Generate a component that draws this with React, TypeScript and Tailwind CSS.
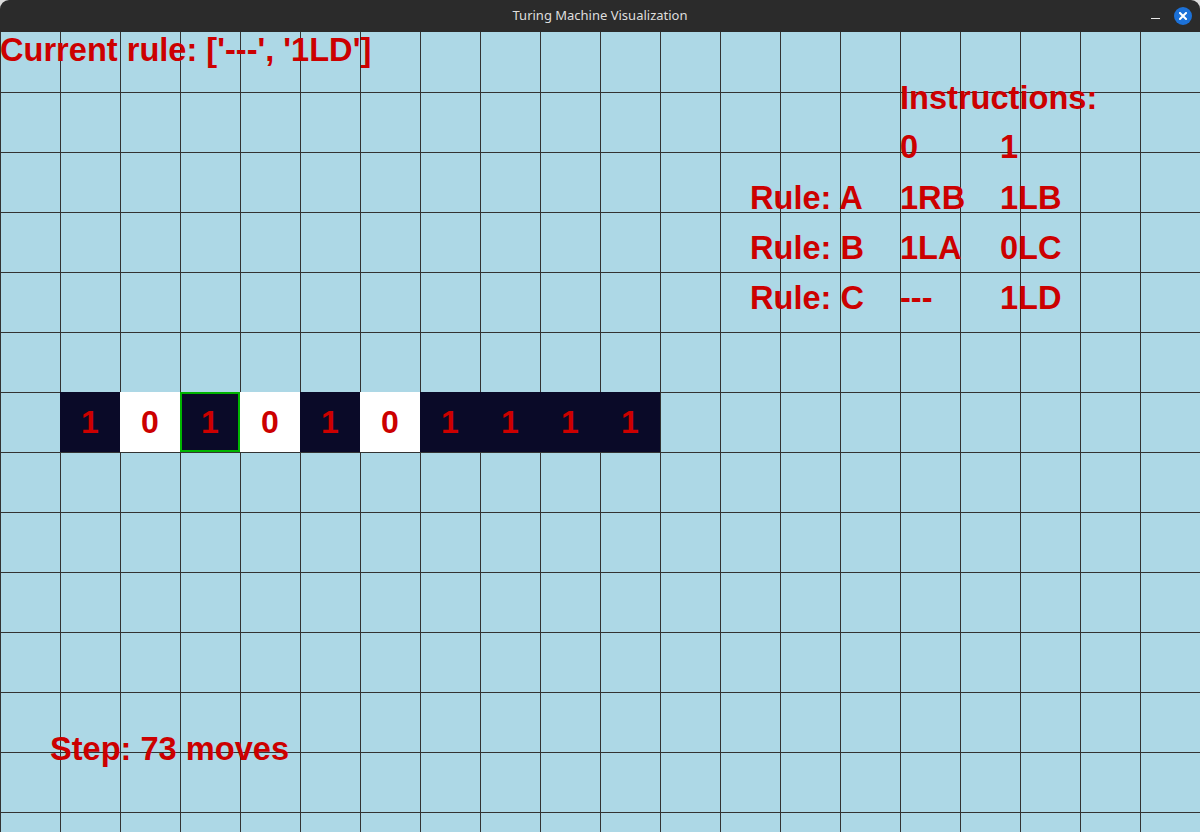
import React from 'react';

const COLS = 20;
const ROWS = 14;
const TAPE_ROW = 6;
const tape = [1, 0, 1, 0, 1, 0, 1, 1, 1, 1];
const HEAD = 2;

const rules = [
    { name: 'A', zero: '1RB', one: '1LB' },
    { name: 'B', zero: '1LA', one: '0LC' },
    { name: 'C', zero: '---', one: '1LD' },
];

function Label({
    top,
    left,
    children,
}: {
    top: number;
    left: number;
    children: React.ReactNode;
}) {
    return (
        <span
            className="absolute whitespace-pre font-['Liberation_Sans',Arial,sans-serif] text-[32.6px] leading-[32px] font-bold text-[#cc0000]"
            style={{ top, left }}
        >
            {children}
        </span>
    );
}

function Cell({ row, col }: { row: number; col: number }) {
    const tapeIdx = col - 1;
    const onTape = row === TAPE_ROW && tapeIdx >= 0 && tapeIdx < tape.length;

    if (onTape) {
        const v = tape[tapeIdx];
        const bg = v === 1 ? 'bg-[#0a0a28]' : 'bg-white';
        const head =
            tapeIdx === HEAD ? 'border-2 border-[#00b400]' : '';
        return (
            <div
                className={`${bg} ${head} flex items-center justify-center font-['Liberation_Sans',Arial,sans-serif] text-[32px] font-bold text-[#cc0000]`}
            >
                {v}
            </div>
        );
    }

    return (
        <div
            className={
                row === 0
                    ? 'border-l border-[#333333]'
                    : 'border-l border-t border-[#333333]'
            }
        />
    );
}

export default function App() {
    const cells = [];
    for (let r = 0; r < ROWS; r++) {
        for (let c = 0; c < COLS; c++) {
            cells.push(<Cell key={`${r}-${c}`} row={r} col={c} />);
        }
    }

    return (
        <div className="w-[1200px] h-[832px] bg-[#dcdcdc] flex flex-col overflow-hidden">
            {/* window title bar */}
            <div className="h-[32px] shrink-0 bg-[#2b2b2b] rounded-t-[9px] flex items-center relative">
                <div className="flex-1 text-center text-[13px] text-[#dedede] font-['Noto_Sans',Ubuntu,sans-serif]">
                    Turing Machine Visualization
                </div>
                <div className="absolute right-[8px] top-0 h-[32px] flex items-center gap-[14px]">
                    <div className="w-[9px] h-[1px] bg-[#e8e8e8] mt-[5px]" />
                    <div className="w-[18px] h-[18px] rounded-full bg-[#1c71d8] flex items-center justify-center">
                        <svg width="8" height="8" viewBox="0 0 8 8">
                            <path
                                d="M1 1 L7 7 M7 1 L1 7"
                                stroke="white"
                                strokeWidth="2"
                                strokeLinecap="square"
                            />
                        </svg>
                    </div>
                </div>
            </div>

            {/* pygame surface */}
            <div className="relative w-[1200px] h-[800px] overflow-hidden bg-[#add8e6]">
                <div className="grid grid-cols-[repeat(20,60px)] auto-rows-[60px]">
                    {cells}
                </div>

                <Label top={2} left={0}>
                    Current rule: ['---', '1LD']
                </Label>

                <Label top={50} left={900}>
                    Instructions:
                </Label>
                <Label top={99} left={900}>
                    0
                </Label>
                <Label top={99} left={1000}>
                    1
                </Label>
                {rules.map((r, i) => (
                    <React.Fragment key={r.name}>
                        <Label top={150 + i * 50} left={750}>
                            Rule: {r.name}
                        </Label>
                        <Label top={150 + i * 50} left={900}>
                            {r.zero}
                        </Label>
                        <Label top={150 + i * 50} left={1000}>
                            {r.one}
                        </Label>
                    </React.Fragment>
                ))}

                <Label top={701} left={50}>
                    Step: 73 moves
                </Label>
            </div>
        </div>
    );
}
